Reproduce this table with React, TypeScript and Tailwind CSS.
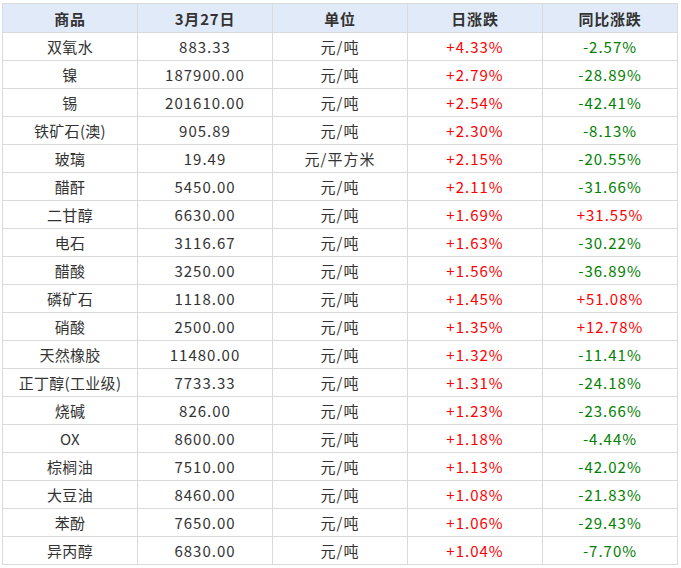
import React from "react";

type Row = [string, string, string, string, string];

const rows: Row[] = [
  ["双氧水", "883.33", "元/吨", "+4.33%", "-2.57%"],
  ["镍", "187900.00", "元/吨", "+2.79%", "-28.89%"],
  ["锡", "201610.00", "元/吨", "+2.54%", "-42.41%"],
  ["铁矿石(澳)", "905.89", "元/吨", "+2.30%", "-8.13%"],
  ["玻璃", "19.49", "元/平方米", "+2.15%", "-20.55%"],
  ["醋酐", "5450.00", "元/吨", "+2.11%", "-31.66%"],
  ["二甘醇", "6630.00", "元/吨", "+1.69%", "+31.55%"],
  ["电石", "3116.67", "元/吨", "+1.63%", "-30.22%"],
  ["醋酸", "3250.00", "元/吨", "+1.56%", "-36.89%"],
  ["磷矿石", "1118.00", "元/吨", "+1.45%", "+51.08%"],
  ["硝酸", "2500.00", "元/吨", "+1.35%", "+12.78%"],
  ["天然橡胶", "11480.00", "元/吨", "+1.32%", "-11.41%"],
  ["正丁醇(工业级)", "7733.33", "元/吨", "+1.31%", "-24.18%"],
  ["烧碱", "826.00", "元/吨", "+1.23%", "-23.66%"],
  ["OX", "8600.00", "元/吨", "+1.18%", "-4.44%"],
  ["棕榈油", "7510.00", "元/吨", "+1.13%", "-42.02%"],
  ["大豆油", "8460.00", "元/吨", "+1.08%", "-21.83%"],
  ["苯酚", "7650.00", "元/吨", "+1.06%", "-29.43%"],
  ["异丙醇", "6830.00", "元/吨", "+1.04%", "-7.70%"],
];

const headers = ["商品", "3月27日", "单位", "日涨跌", "同比涨跌"];

// number-ish cells are a touch wider in the original, hence the tracking
const cell = "h-[28px] border border-[#dadada] p-0 text-center leading-none";
const numCell = `${cell} tracking-[1px]`;

const changeColor = (v: string) =>
  v.startsWith("+") ? "text-[#ff0000]" : "text-[#008000]";

export default function App() {
  return (
    <div className="w-[681px] h-[568px] bg-white pt-[3px] pl-[2px] font-['Noto_Sans_CJK_SC','Noto_Sans',sans-serif] text-[15px] text-[#333]">
      <table className="w-[676px] table-fixed border-collapse">
        <thead>
          <tr className="bg-[#e1eaf8]">
            {headers.map((h) => (
              <th
                key={h}
                className="h-[29px] border border-[#dadada] p-0 text-center font-bold leading-none tracking-[0.8px]"
              >
                {h}
              </th>
            ))}
          </tr>
        </thead>
        <tbody>
          {rows.map((r) => (
            <tr key={r[0]}>
              <td className={`${cell} tracking-[0.3px]`}>{r[0]}</td>
              <td className={numCell}>{r[1]}</td>
              <td className={numCell}>{r[2]}</td>
              <td className={`${numCell} ${changeColor(r[3])}`}>{r[3]}</td>
              <td className={`${numCell} ${changeColor(r[4])}`}>{r[4]}</td>
            </tr>
          ))}
        </tbody>
      </table>
    </div>
  );
}
